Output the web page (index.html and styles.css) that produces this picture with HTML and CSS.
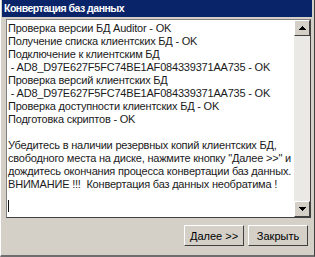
FILE: index.html
```html
<!DOCTYPE html>
<html lang="ru">
<head>
    <meta charset="UTF-8">
    <title>Конвертация баз данных</title>
    <link rel="stylesheet" href="styles.css">
</head>
<body>
    <div class="window">
        <div class="titlebar">Конвертация баз данных</div>

        <div class="log-box">
            <div class="log-text">
                <div>Проверка версии БД Auditor - OK</div>
                <div>Получение списка клиентских БД - OK</div>
                <div>Подключение к клиентским БД</div>
                <div>&nbsp;- AD8_D97E627F5FC74BE1AF084339371AA735 - OK</div>
                <div>Проверка версий клиентских БД</div>
                <div>&nbsp;- AD8_D97E627F5FC74BE1AF084339371AA735 - OK</div>
                <div>Проверка доступности клиентских БД - OK</div>
                <div>Подготовка скриптов - OK</div>
                <div>&nbsp;</div>
                <div>Убедитесь в наличии резервных копий клиентских БД,</div>
                <div>свободного места на диске, нажмите кнопку "Далее &gt;&gt;" и</div>
                <div>дождитесь окончания процесса конвертации баз данных.</div>
                <div>ВНИМАНИЕ !!!&nbsp; Конвертация баз данных необратима !</div>
                <div class="caret-line"><span class="caret"></span></div>
            </div>
            <div class="scrollbar">
                <div class="sb-btn">
                    <svg width="7" height="4" viewBox="0 0 7 4"><path d="M3 0h1v1h1v1h1v1h1v1H0V3h1V2h1V1h1z" fill="#000"/></svg>
                </div>
                <div class="sb-track"></div>
                <div class="sb-btn">
                    <svg width="7" height="4" viewBox="0 0 7 4"><path d="M0 0h7v1H6v1H5v1H4v1H3V3H2V2H1V1H0z" fill="#000"/></svg>
                </div>
            </div>
        </div>

        <div class="buttons">
            <button class="btn">Далее &gt;&gt;</button>
            <button class="btn">Закрыть</button>
        </div>
    </div>
</body>
</html>
```

FILE: styles.css
```css
html, body {
    margin: 0;
    padding: 0;
}

body {
    font-family: "Liberation Sans", Arial, sans-serif;
    font-size: 11px;
    background-color: #d4d0c8;
}

.window {
    width: 315px;
    height: 257px;
    box-sizing: border-box;
    background-color: #d4d0c8;
    border-left: 1px solid #ffffff;
    border-right: 1px solid #404040;
    border-bottom: 2px solid #6e6e6e;
    padding: 0 2px 0 1px;
    display: flex;
    flex-direction: column;
}

.titlebar {
    height: 17px;
    background-color: #0a246a;
    color: #ffffff;
    font-weight: bold;
    font-size: 10.5px;
    letter-spacing: -0.5px;
    line-height: 16px;
    padding-left: 2px;
}

.log-box {
    margin: 2px 0 0 4px;
    width: 305px;
    height: 199px;
    box-sizing: border-box;
    border-top: 1px solid #808080;
    border-left: 1px solid #808080;
    border-right: 1px solid #404040;
    border-bottom: 1px solid #404040;
    background-color: #ffffff;
    display: flex;
}

.log-text {
    flex: 1;
    padding: 2px 0 0 1px;
    line-height: 13px;
    letter-spacing: -0.2px;
    color: #1a1a1a;
    white-space: nowrap;
}

.caret-line {
    padding-top: 9px;
}

.caret {
    display: block;
    width: 1px;
    height: 12px;
    background-color: #111111;
}

.scrollbar {
    width: 16px;
    display: flex;
    flex-direction: column;
    background-color: #ebe9e5;
}

.sb-track {
    flex: 1;
}

.sb-btn {
    height: 16px;
    box-sizing: border-box;
    background-color: #d4d0c8;
    border-top: 1px solid #ffffff;
    border-left: 1px solid #ffffff;
    border-right: 1px solid #404040;
    border-bottom: 1px solid #404040;
    display: flex;
    align-items: center;
    justify-content: center;
}

.buttons {
    display: flex;
    justify-content: flex-end;
    gap: 4px;
    margin-top: 7px;
    padding-right: 4px;
}

.btn {
    width: 60px;
    height: 21px;
    box-sizing: border-box;
    background-color: #d4d0c8;
    border-top: 1px solid #ffffff;
    border-left: 1px solid #ffffff;
    border-right: 1px solid #404040;
    border-bottom: 1px solid #404040;
    font-family: "Liberation Sans", Arial, sans-serif;
    font-size: 11px;
    color: #000000;
    padding: 0;
}
```
